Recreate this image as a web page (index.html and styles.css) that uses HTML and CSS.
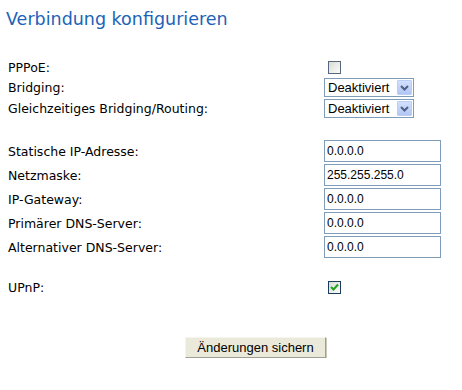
FILE: index.html
```html
<!DOCTYPE html>
<html lang="de">
  <head>
    <meta charset="utf-8">
    <link rel="stylesheet" href="styles.css">
    <title>Verbindung konfigurieren</title>
  </head>
  <body>
    <h1 class="title">Verbindung konfigurieren</h1>

    <form class="config">
      <div class="group group--mode">
        <div class="row row--check">
          <label>PPPoE:</label>
          <span class="check"></span>
        </div>
        <div class="row row--select">
          <label>Bridging:</label>
          <span class="dropdown">
            <select><option>Deaktiviert</option><option>Aktiviert</option></select>
            <span class="dropdown__btn"><svg width="9" height="6" viewBox="0 0 9 6"><path d="M1 1 L4.5 4.5 L8 1" fill="none" stroke="#4d6185" stroke-width="2"/></svg></span>
          </span>
        </div>
        <div class="row row--select">
          <label>Gleichzeitiges Bridging/Routing:</label>
          <span class="dropdown">
            <select><option>Deaktiviert</option><option>Aktiviert</option></select>
            <span class="dropdown__btn"><svg width="9" height="6" viewBox="0 0 9 6"><path d="M1 1 L4.5 4.5 L8 1" fill="none" stroke="#4d6185" stroke-width="2"/></svg></span>
          </span>
        </div>
      </div>

      <div class="group group--ip">
        <div class="row row--text">
          <label>Statische IP-Adresse:</label>
          <input type="text" value="0.0.0.0">
        </div>
        <div class="row row--text">
          <label>Netzmaske:</label>
          <input type="text" value="255.255.255.0">
        </div>
        <div class="row row--text">
          <label>IP-Gateway:</label>
          <input type="text" value="0.0.0.0">
        </div>
        <div class="row row--text">
          <label>Primärer DNS-Server:</label>
          <input type="text" value="0.0.0.0">
        </div>
        <div class="row row--text">
          <label>Alternativer DNS-Server:</label>
          <input type="text" value="0.0.0.0">
        </div>
      </div>

      <div class="group group--upnp">
        <div class="row row--check">
          <label>UPnP:</label>
          <span class="check check--on"><svg width="9" height="8" viewBox="0 0 9 8"><path d="M1 4 L3.5 6.5 L8 1.5" fill="none" stroke="#21a121" stroke-width="2"/></svg></span>
        </div>
      </div>

      <div class="actions">
        <button type="button" class="btn">Änderungen sichern</button>
      </div>
    </form>
  </body>
</html>
```

FILE: styles.css
```css
* { box-sizing: border-box; }

body {
  margin: 0;
  background: #fff;
  color: #000;
  font-family: "DejaVu Sans", Verdana, sans-serif;
  font-size: 12.5px;
}

.title {
  margin: 0;
  padding: 9px 0 0 6px;
  font-size: 17.5px;
  font-weight: normal;
  line-height: 20px;
  color: #1c63b7;
}

.config { padding: 0 0 0 8px; }

.group--mode { margin-top: 28px; }
.group--ip { margin-top: 20px; }
.group--upnp { margin-top: 18px; }

.row {
  display: grid;
  grid-template-columns: 316px auto;
  align-items: center;
  justify-items: start;
}
.row--check { height: 20px; }
.row--select { height: 21px; }
.row--text { height: 24px; }

/* checkboxes */
.check {
  display: flex;
  align-items: center;
  justify-content: center;
  width: 13px;
  height: 13px;
  margin-left: 4px;
  border: 1px solid #56677a;
  background: linear-gradient(135deg, #dcdcd6, #fbfbf9);
}
.check--on { border-color: #1c3c5c; }

/* selects */
.dropdown {
  position: relative;
  display: inline-block;
  width: 90px;
  height: 19px;
}
.dropdown select {
  -webkit-appearance: none;
  appearance: none;
  width: 100%;
  height: 100%;
  margin: 0;
  padding: 0 0 0 3px;
  border: 1px solid #7f9db9;
  border-radius: 0;
  background: #fff;
  font-family: "Liberation Sans", Arial, sans-serif;
  font-size: 13px;
  color: #000;
}
.dropdown__btn {
  position: absolute;
  top: 2px;
  right: 2px;
  width: 15px;
  height: 15px;
  display: flex;
  align-items: center;
  justify-content: center;
  border: 1px solid #b9cdf7;
  border-radius: 1px;
  background: linear-gradient(#d3e0fd, #b2c6f4);
  pointer-events: none;
}

/* text fields */
.row--text input {
  width: 117px;
  height: 22px;
  margin: 0;
  padding: 0 0 0 2px;
  border: 1px solid #7f9db9;
  font-family: "Liberation Sans", Arial, sans-serif;
  font-size: 12px;
  color: #000;
}

.actions {
  margin-top: 40px;
  padding-left: 177px;
}
.btn {
  width: 141px;
  height: 21px;
  padding: 0;
  border: 1px solid #f5f4ee;
  border-right-color: #a09f93;
  border-bottom-color: #a09f93;
  box-shadow: 1px 1px 0 #c9c7ba;
  background: #ebe9d9;
  font-family: "Liberation Sans", Arial, sans-serif;
  font-size: 13px;
  color: #000;
}
```
